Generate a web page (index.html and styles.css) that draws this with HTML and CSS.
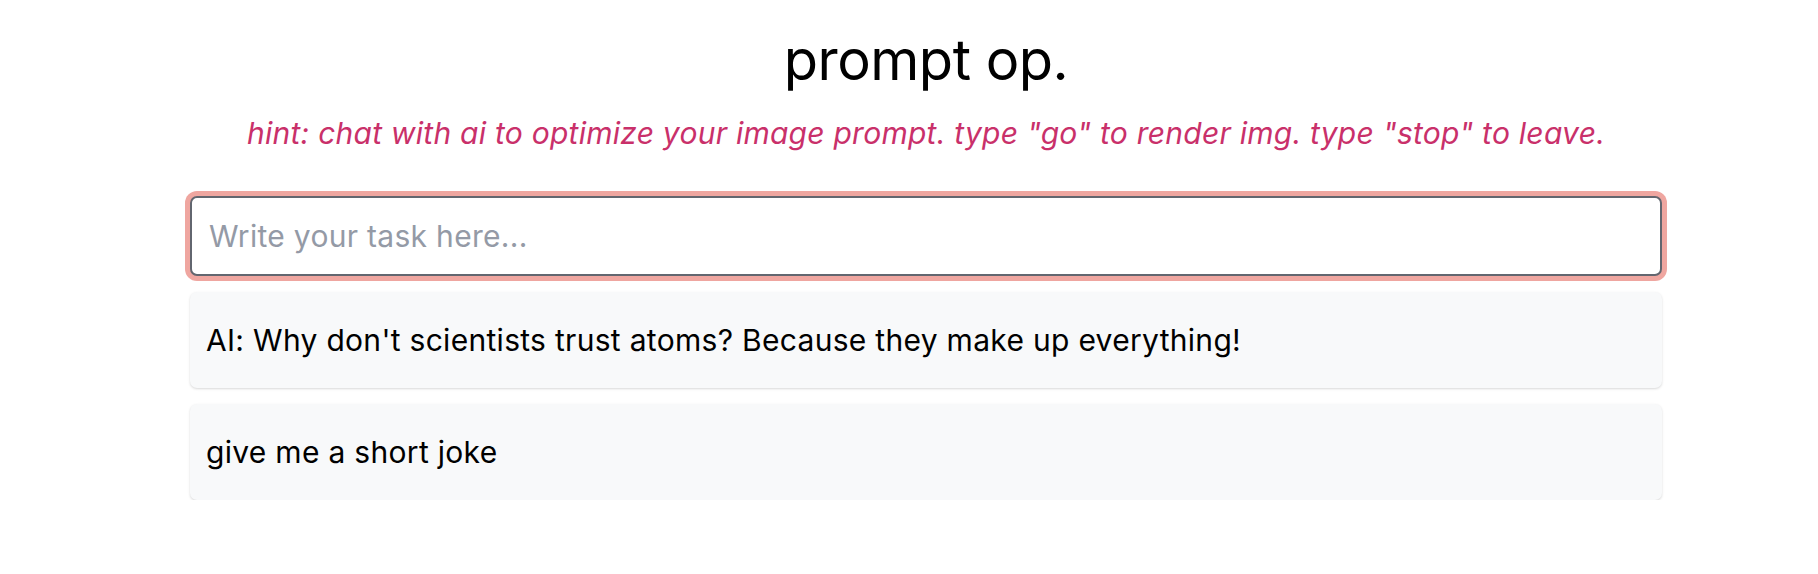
FILE: index.html
```html
<!DOCTYPE html>
<html lang="en">
<head>
<meta charset="utf-8">
<title>prompt op.</title>
<link rel="stylesheet" href="styles.css">
</head>
<body>
<main class="wrap">
  <h1 class="title">prompt op.</h1>
  <p class="hint">hint: chat with ai to optimize your image prompt. type "go" to render img. type "stop" to leave.</p>
  <input class="task" type="text" placeholder="Write your task here...">
  <div class="messages">
    <div class="msg">AI: Why don't scientists trust atoms? Because they make up everything!</div>
    <div class="msg">give me a short joke</div>
  </div>
</main>
</body>
</html>
```

FILE: styles.css
```css
* { box-sizing: border-box; }
html, body { margin: 0; padding: 0; background: #fff; }
body {
  font-family: Inter, "Noto Sans", sans-serif;
  color: #000;
  padding-left: 34px;
}
.wrap {
  width: 1472px;
  margin: 0 auto;
  display: flex;
  flex-direction: column;
  align-items: stretch;
}
.title {
  margin: 28px 0 0;
  text-align: center;
  font-weight: 400;
  font-size: 56px;
  line-height: 64px;
  letter-spacing: -0.5px;
}
.hint {
  margin: 21px 0 0;
  text-align: center;
  font-style: italic;
  font-size: 30px;
  line-height: 40px;
  letter-spacing: 0.25px;
  color: #c9306a;
}
.task {
  margin-top: 43px;
  height: 80px;
  border: 2px solid #62666f;
  border-radius: 7px;
  box-shadow: 0 0 0 5px #efa6a0;
  padding: 0 17px;
  font-family: Inter, "Noto Sans", sans-serif;
  font-size: 30px;
  letter-spacing: 0.3px;
  color: #000;
  outline: none;
}
.task::placeholder { color: #949aa6; }
.messages {
  margin-top: 16px;
  display: flex;
  flex-direction: column;
  gap: 16px;
}
.msg {
  height: 96px;
  display: flex;
  align-items: center;
  padding: 0 16px;
  background: #f8f9fa;
  border-radius: 7px;
  box-shadow: 0 1px 3px rgba(0,0,0,0.1), 0 1px 2px rgba(0,0,0,0.06);
  font-size: 30px;
  letter-spacing: 0.3px;
}
```
